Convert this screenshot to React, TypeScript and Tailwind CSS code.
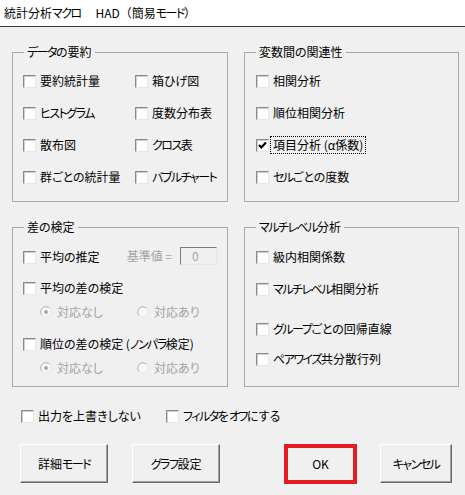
import React from "react";

function K({ t }: { t: string }) {
  const parts = t.split(/([\u30A0-\u30FF]+)/);
  return (
    <>
      {parts.map((p, i) =>
        /^[\u30A0-\u30FF]+$/.test(p) ? (
          <span key={i} className="tracking-[-1.5px]">
            {p}
          </span>
        ) : (
          <React.Fragment key={i}>{p}</React.Fragment>
        )
      )}
    </>
  );
}

function Box({ checked }: { checked?: boolean }) {
  return (
    <span className="relative inline-flex items-center justify-center w-[13px] h-[13px] shrink-0 bg-white border border-t-[#8a8a8a] border-l-[#8a8a8a] border-r-[#e6e6e6] border-b-[#e6e6e6] shadow-[inset_1px_1px_0_#cfcfcf]">
      {checked && (
        <svg width="11" height="11" viewBox="0 0 11 11">
          <polyline points="2,5 4.3,7.5 9,2.5" fill="none" stroke="#000" strokeWidth="2.2" />
        </svg>
      )}
    </span>
  );
}

function Check({
  label,
  checked,
  focus,
}: {
  label: string;
  checked?: boolean;
  focus?: boolean;
}) {
  return (
    <div className="flex items-center gap-[4px] whitespace-nowrap">
      <Box checked={checked} />
      {focus ? (
        <span className="ml-[-3px] border border-dotted border-black px-[2px] leading-4">
          <K t={label} />
        </span>
      ) : (
        <span className="leading-4">
          <K t={label} />
        </span>
      )}
    </div>
  );
}

function Radio({ selected, label }: { selected?: boolean; label: string }) {
  return (
    <div className="flex items-center gap-[5px] text-[#a3a3a3] whitespace-nowrap">
      <svg width="12" height="12" viewBox="0 0 12 12" className="shrink-0">
        <circle cx="6" cy="6" r="5.3" fill="#f7f7f7" />
        <path d="M2.25 9.75 A5.3 5.3 0 0 1 9.75 2.25" fill="none" stroke="#b0b0b0" strokeWidth="1" />
        <path d="M9.75 2.25 A5.3 5.3 0 0 1 2.25 9.75" fill="none" stroke="#e4e4e4" strokeWidth="1" />
        {selected && <circle cx="6" cy="6" r="2" fill="#a8a8a8" />}
      </svg>
      <span className="leading-4">{label}</span>
    </div>
  );
}

function Frame({ title, children }: { title: string; children: React.ReactNode }) {
  return (
    <fieldset className="border border-[#a8a8a8] min-w-0">
      <legend className="ml-[11px] px-[3px] leading-4">
        <K t={title} />
      </legend>
      {children}
    </fieldset>
  );
}

function Btn({ label, w }: { label: string; w: string }) {
  return (
    <div
      className={
        "h-[39px] flex items-center justify-center bg-[#f0f0f0] border border-t-white border-l-white border-r-[#696969] border-b-[#696969] shadow-[inset_-1px_-1px_0_#a0a0a0] " +
        w
      }
    >
      <K t={label} />
    </div>
  );
}

export default function App() {
  return (
    <div className="w-[465px] h-[495px] bg-[#f0f0f0] text-[12px] text-black font-['Noto_Sans_CJK_JP',sans-serif] [font-feature-settings:'palt'] overflow-hidden flex flex-col">
      <div className="h-[27px] shrink-0 bg-white border-b border-[#3a3a3a] flex items-center pl-[4px] leading-4 whitespace-pre">
        <K t="統計分析マクロ" />
        {"　 HAD"}
        <span className="[font-feature-settings:normal]">（</span>
        簡易
        <K t="モード" />
        <span className="[font-feature-settings:normal]">）</span>
      </div>

      <div className="grid grid-cols-[216px_215px] gap-x-[16px] gap-y-[17px] ml-[12px] mt-[17px]">
        <Frame title="データの要約">
          <div className="grid grid-cols-[112px_1fr] auto-rows-[32px] items-center pl-[10px] pt-[5px] pb-[8px]">
            <Check label="要約統計量" />
            <Check label="箱ひげ図" />
            <Check label="ヒストグラム" />
            <Check label="度数分布表" />
            <Check label="散布図" />
            <Check label="クロス表" />
            <Check label="群ごとの統計量" />
            <Check label="バブルチャート" />
          </div>
        </Frame>

        <Frame title="変数間の関連性">
          <div className="grid auto-rows-[32px] items-center pl-[11px] pt-[5px] pb-[8px]">
            <Check label="相関分析" />
            <Check label="順位相関分析" />
            <Check label="項目分析 (α係数)" checked focus />
            <Check label="セルごとの度数" />
          </div>
        </Frame>

        <Frame title="差の検定">
          <div className="flex flex-col pl-[10px] pr-[10px] pt-[6px] pb-[9px]">
            <div className="h-[32px] flex items-center justify-between">
              <Check label="平均の推定" />
              <div className="flex items-center gap-[8px] mb-[3px]">
                <span className="text-[#a3a3a3] leading-4">基準値 =</span>
                <div className="w-[37px] h-[18px] flex items-center pl-[11px] text-[#a3a3a3] bg-[#f0f0f0] border border-t-[#7a7a7a] border-l-[#7a7a7a] border-r-[#e6e6e6] border-b-[#e6e6e6] leading-4">
                  0
                </div>
              </div>
            </div>
            <div className="h-[30px] flex items-center">
              <Check label="平均の差の検定" />
            </div>
            <div className="h-[18px] flex items-center pl-[17px]">
              <div className="w-[97px]">
                <Radio label="対応なし" selected />
              </div>
              <Radio label="対応あり" />
            </div>
            <div className="h-[30px] mt-[8px] flex items-center">
              <Check label="順位の差の検定 (ノンパラ検定)" />
            </div>
            <div className="h-[18px] flex items-center pl-[17px]">
              <div className="w-[97px]">
                <Radio label="対応なし" selected />
              </div>
              <Radio label="対応あり" />
            </div>
          </div>
        </Frame>

        <Frame title="マルチレベル分析">
          <div className="flex flex-col pl-[11px] pt-[6px] pb-[9px]">
            <div className="h-[32px] flex items-center">
              <Check label="級内相関係数" />
            </div>
            <div className="h-[32px] flex items-center">
              <Check label="マルチレベル相関分析" />
            </div>
            <div className="h-[32px] mt-[8px] flex items-center">
              <Check label="グループごとの回帰直線" />
            </div>
            <div className="h-[28px] flex items-center">
              <Check label="ペアワイズ共分散行列" />
            </div>
          </div>
        </Frame>
      </div>

      <div className="h-[16px] mt-[21px] flex items-center pl-[21px]">
        <div className="w-[145px]">
          <Check label="出力を上書きしない" />
        </div>
        <Check label="フィルタをオフにする" />
      </div>

      <div className="mt-[20px] flex items-start pl-[20px]">
        <Btn label="詳細モード" w="w-[88px]" />
        <div className="ml-[24px]">
          <Btn label="グラフ設定" w="w-[88px]" />
        </div>
        <div className="ml-[64px] w-[73px] h-[40px] flex items-center justify-center bg-[#f0f0f0] border-[4px] border-[#e31c23]">
          OK
        </div>
        <div className="ml-[23px]">
          <Btn label="キャンセル" w="w-[72px]" />
        </div>
      </div>
    </div>
  );
}
